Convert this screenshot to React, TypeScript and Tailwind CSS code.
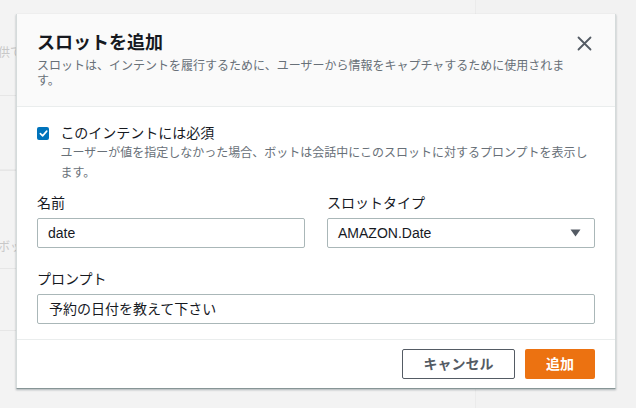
import React from "react";

const font = { fontFamily: '"Liberation Sans", "Noto Sans CJK JP", sans-serif' };

export default function App() {
  return (
    <div
      className="relative w-[636px] h-[408px] overflow-hidden bg-[#f2f2f2] text-[#16191f]"
      style={font}
    >
      {/* background page (behind modal) */}
      <div className="flex h-full">
        <div className="w-[476px] h-full bg-[#f3f3f3] border-r border-[#ebebeb] flex flex-col">
          <div className="h-[96px] border-b border-[#e6e6e6] flex items-end pb-[33px]">
            <span className="text-[12px] text-[#c8c8c8] -ml-[2px]">供て</span>
          </div>
          <div className="h-[74px] border-b border-[#ebebeb]" />
          <div className="h-[88px] border-t border-[#e6e6e6] flex items-end pb-[2px]">
            <span className="text-[12px] text-[#c8c8c8] -ml-[2px]">ボッ</span>
          </div>
          <div className="h-[62px] border-t border-[#e6e6e6] mt-[10px]" />
          <div className="border-t border-[#e6e6e6]" />
        </div>
        <div className="flex-1" />
      </div>

      {/* modal */}
      <div className="absolute left-[16px] top-[14px] w-[600px] bg-white border-x border-[#d5dbdb] border-b border-b-[#879596] shadow-[0_1px_2px_rgba(0,28,36,0.3)]">
        <div className="bg-[#fafafa] border-b border-[#eaeded] pl-[20px] pr-[20px] pt-[16px] pb-[17px] relative">
          <div className="text-[18px] font-bold leading-[26px] text-[#16191f]">スロットを追加</div>
          <div className="text-[12px] leading-[15px] text-[#687078] w-[530px] mt-[3px]">
            スロットは、インテントを履行するために、ユーザーから情報をキャプチャするために使用されます。
          </div>
          <button className="absolute right-[23px] top-[22px] text-[#545b64]">
            <svg width="15" height="15" viewBox="0 0 15 15" fill="none">
              <path d="M1.5 1.5 L13.5 13.5 M13.5 1.5 L1.5 13.5" stroke="currentColor" strokeWidth="1.8" strokeLinecap="round" />
            </svg>
          </button>
        </div>

        <div className="px-[20px] pt-[16px] pb-[15px]">
          <div className="flex">
            <div className="w-[13px] h-[13px] mt-[4px] bg-[#0073bb] rounded-[2px] flex items-center justify-center">
              <svg width="9" height="9" viewBox="0 0 10 10" fill="none">
                <path d="M1.5 5.2 L4 7.6 L8.6 2.4" stroke="white" strokeWidth="1.8" strokeLinecap="round" strokeLinejoin="round" />
              </svg>
            </div>
            <div className="ml-[11px]">
              <div className="text-[14px] leading-[20px] text-[#16191f]">このインテントには必須</div>
              <div className="text-[12px] leading-[20px] text-[#687078]">
                ユーザーが値を指定しなかった場合、ボットは会話中にこのスロットに対するプロンプトを表示します。
              </div>
            </div>
          </div>

          <div className="grid grid-cols-2 gap-x-[22px] mt-[10px]">
            <div>
              <div className="text-[14px] leading-[20px] text-[#16191f]">名前</div>
              <div className="mt-[5px] h-[30px] border border-[#aab7b8] rounded-[2px] flex items-center px-[10px] text-[14px]">
                date
              </div>
            </div>
            <div>
              <div className="text-[14px] leading-[20px] text-[#16191f]">スロットタイプ</div>
              <div className="mt-[5px] h-[30px] border border-[#aab7b8] rounded-[2px] flex items-center justify-between pl-[10px] pr-[13px] text-[14px]">
                <span>AMAZON.Date</span>
                <svg width="11" height="8" viewBox="0 0 11 8">
                  <path d="M0.5 0.5 L10.5 0.5 L5.5 7.5 Z" fill="#545b64" />
                </svg>
              </div>
            </div>
          </div>

          <div className="mt-[21px]">
            <div className="text-[14px] leading-[20px] text-[#16191f]">プロンプト</div>
            <div className="mt-[5px] h-[30px] border border-[#aab7b8] rounded-[2px] flex items-center px-[11px] text-[14px]">
              予約の日付を教えて下さい
            </div>
          </div>
        </div>

        <div className="border-t border-[#eaeded] px-[20px] pt-[9px] pb-[9px] flex justify-end gap-[10px]">
          <button className="w-[113px] h-[30px] border border-[#545b64] rounded-[2px] bg-white text-[14px] font-bold text-[#545b64]">
            キャンセル
          </button>
          <button className="w-[70px] h-[30px] rounded-[2px] bg-[#ec7211] text-[14px] font-bold text-white">
            追加
          </button>
        </div>
      </div>
    </div>
  );
}
